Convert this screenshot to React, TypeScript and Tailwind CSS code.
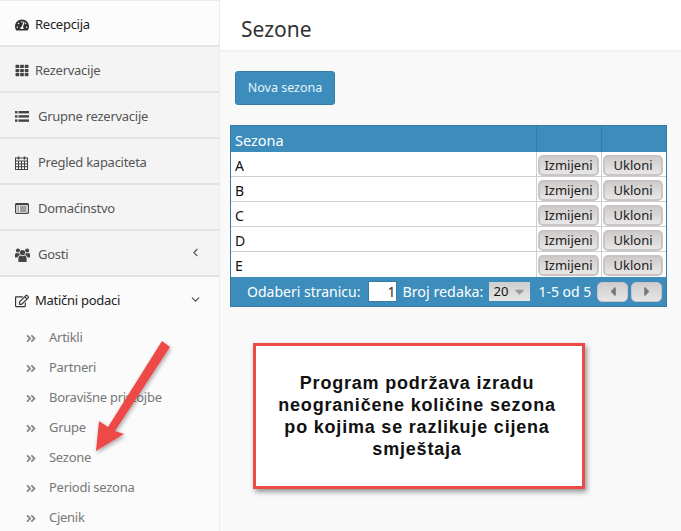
import { FaTachometerAlt, FaTh, FaRegEdit, FaAngleDoubleRight, FaCaretLeft, FaCaretRight, FaCaretDown } from 'react-icons/fa';
import { ChevronLeft, ChevronDown } from 'lucide-react';

function ListIcon() {
  return (
    <svg viewBox="0 0 14 11" className="h-[11px] w-[14px]" fill="currentColor">
      <rect x="0" y="0" width="2.5" height="2.4" />
      <rect x="3.5" y="0" width="10.5" height="2.4" />
      <rect x="0" y="4.2" width="2.5" height="2.4" />
      <rect x="3.5" y="4.2" width="10.5" height="2.4" />
      <rect x="0" y="8.4" width="2.5" height="2.4" />
      <rect x="3.5" y="8.4" width="10.5" height="2.4" />
    </svg>
  );
}

function CalendarIcon() {
  return (
    <svg viewBox="0 0 13 14" className="h-[14px] w-[13px]" fill="none" stroke="currentColor" strokeWidth="1">
      <rect x="0.5" y="2" width="12" height="11.5" />
      <path d="M0.5 5h12M0.5 7.9h12M0.5 10.7h12M3.5 5v8.5M6.5 5v8.5M9.5 5v8.5" />
      <path d="M3.5 0.5v3M9.5 0.5v3" strokeWidth="1.6" />
    </svg>
  );
}

function ListAltIcon() {
  return (
    <svg viewBox="0 0 14 11" className="h-[11px] w-[14px]">
      <rect x="0.6" y="0.6" width="12.8" height="9.8" rx="1" fill="#f4f4f4" stroke="currentColor" strokeWidth="1.2" />
      <rect x="0.6" y="0.6" width="12.8" height="1.6" fill="currentColor" />
      <path d="M2.5 4h1.5M2.5 6h1.5M2.5 8h1.5M5 4h6.5M5 6h6.5M5 8h6.5" stroke="currentColor" strokeWidth="1" />
    </svg>
  );
}

function UsersIcon() {
  return (
    <svg viewBox="0 0 15 14" className="h-[14px] w-[15px]" fill="currentColor">
      <circle cx="7.5" cy="4.6" r="2.6" />
      <path d="M3.4 14V10.2C3.4 8.4 4.6 7.6 5.8 7.6 6.3 8 6.9 8.2 7.5 8.2 8.1 8.2 8.7 8 9.2 7.6 10.4 7.6 11.6 8.4 11.6 10.2V14Z" />
      <circle cx="2.9" cy="2.6" r="2" />
      <circle cx="12.1" cy="2.6" r="2" />
      <path d="M0 9.4V6.8C0 5.6.8 5 1.7 5 2.1 5.3 2.5 5.4 2.9 5.4 3.4 5.4 3.8 5.3 4.1 5.1 4.2 5.8 4.6 6.5 5.1 6.9 3.7 7.2 2.7 8.1 2.5 9.4Z" />
      <path d="M15 9.4V6.8C15 5.6 14.2 5 13.3 5 12.9 5.3 12.5 5.4 12.1 5.4 11.6 5.4 11.2 5.3 10.9 5.1 10.8 5.8 10.4 6.5 9.9 6.9 11.3 7.2 12.3 8.1 12.5 9.4Z" />
    </svg>
  );
}

const MENU = [
  { label: 'Recepcija', icon: <FaTachometerAlt className="h-[14px] w-[14px]" />, active: true, gap: 'w-[20px]' },
  { label: 'Rezervacije', icon: <FaTh className="h-[13px] w-[14px]" />, gap: 'w-[20px]' },
  { label: 'Grupne rezervacije', icon: <ListIcon />, gap: 'w-[23px]' },
  { label: 'Pregled kapaciteta', icon: <CalendarIcon />, gap: 'w-[23px]' },
  { label: 'Domaćinstvo', icon: <ListAltIcon />, gap: 'w-[23px]' },
  { label: 'Gosti', icon: <UsersIcon />, gap: 'w-[23px]', caret: true },
];

const SUBMENU = ['Artikli', 'Partneri', 'Boravišne pristojbe', 'Grupe', 'Sezone', 'Periodi sezona', 'Cjenik'];
const SEASONS = ['A', 'B', 'C', 'D', 'E'];

function GreyButton({ label }: { label: string }) {
  return (
    <button className="h-[21px] w-full rounded-[5px] border-2 border-[#c9c5c5] bg-gradient-to-b from-[#cfcbcb] to-[#e8e6e6] text-[13px] leading-none text-[#1a1a1a]">
      {label}
    </button>
  );
}

function Sidebar() {
  return (
    <aside className="w-[220px] shrink-0 h-[531px] overflow-hidden bg-[#fbfbfb] border-r border-t border-[#ececec] tracking-[-0.27px]">
      {MENU.map(item => (
        <div
          key={item.label}
          className={`h-[46px] flex items-center pt-[3px] pl-[15px] pr-[19px] border-b-2 border-[#e3e3e3] text-[13px] ${
            item.active ? 'bg-[#fcfcfc] text-[#222]' : 'bg-[#f4f4f4] text-[#555]'
          }`}
        >
          <span className={`${item.gap} shrink-0 flex items-center ${item.active ? 'text-[#333]' : 'text-[#444]'}`}>
            {item.icon}
          </span>
          <span className="flex-1">{item.label}</span>
          {item.caret && <ChevronLeft strokeWidth={2} className="h-[13px] w-[13px] -mt-[4px] -mr-[2px] text-[#555]" />}
        </div>
      ))}
      <div className="h-[48px] flex items-center pl-[15px] pr-[19px] text-[13px] text-[#222]">
        <FaRegEdit className="h-[14px] w-[14px] mr-[6px] text-[#333]" />
        <span className="flex-1">Matični podaci</span>
        <ChevronDown strokeWidth={2} className="h-[13px] w-[13px] -mt-[4px] -mr-[2px] text-[#444]" />
      </div>
      <div className="-mt-[2px]">
        {SUBMENU.map(label => (
          <div key={label} className="h-[30px] flex items-center pl-[26px] text-[13px] text-[#777]">
            <FaAngleDoubleRight className="h-[13px] w-[10px] mr-[13px] text-[#888]" />
            {label}
          </div>
        ))}
      </div>
    </aside>
  );
}

function SeasonTable() {
  return (
    <div className="w-[437px] ml-[-5px] mt-[20px] border border-[#357ca5]">
      <div className="h-[26px] flex bg-[#3c8dbc] text-white text-[14.5px] leading-[29px]">
        <div className="w-[305px] pl-[4px]">Sezona</div>
        <div className="w-[65px] border-l border-[#357ca5]" />
        <div className="flex-1 border-l border-[#357ca5]" />
      </div>
      {SEASONS.map((season, i) => (
        <div key={season} className={`h-[25px] flex bg-white text-[14px] text-[#111] ${i < 4 ? 'border-b border-[#cfcfcf]' : ''}`}>
          <div className="w-[305px] pl-[4px] leading-[28px]">{season}</div>
          <div className="w-[65px] border-l border-[#cfcfcf] pl-[1px] pr-[2px] pt-[2px]">
            <GreyButton label="Izmijeni" />
          </div>
          <div className="flex-1 border-l border-[#cfcfcf] pl-[1px] pr-[3px] pt-[2px]">
            <GreyButton label="Ukloni" />
          </div>
        </div>
      ))}
      <div className="h-[29px] flex items-center bg-[#3c8dbc] pl-[16px] text-[14px] text-white">
        <span>Odaberi stranicu:</span>
        <span className="ml-[8px] w-[29px] h-[21px] bg-white border border-[#357ca5] text-right pr-[1px] text-[#333] leading-[20px]">1</span>
        <span className="ml-[5px] w-[81px] text-[14.3px] whitespace-nowrap">Broj redaka:</span>
        <span className="ml-[6px] w-[41px] h-[19px] bg-gradient-to-b from-[#cfcdcd] to-[#e6e6e6] flex items-center justify-between pl-[4px] pr-[3px] text-[13px] text-[#111]">
          20
          <FaCaretDown className="h-[15px] w-[15px] text-[#999]" />
        </span>
        <span className="ml-[8px] w-[52px] whitespace-nowrap text-[14px]">1-5 od 5</span>
        <span className="ml-[7px] w-[31px] h-[20px] rounded-[5px] bg-gradient-to-b from-[#cfcdcd] to-[#e6e6e6] border border-[#c9c5c5] flex items-center justify-center">
          <FaCaretLeft className="h-[15px] w-[10px] text-[#777]" />
        </span>
        <span className="ml-[3px] w-[31px] h-[20px] rounded-[5px] bg-gradient-to-b from-[#cfcdcd] to-[#e6e6e6] border border-[#c9c5c5] flex items-center justify-center">
          <FaCaretRight className="h-[15px] w-[10px] text-[#777]" />
        </span>
      </div>
    </div>
  );
}

export default function App() {
  return (
    <div className="relative flex w-[681px] h-[531px] overflow-hidden bg-[#f9f9f9] font-['Noto_Sans','Open_Sans',sans-serif]">
      <Sidebar />
      <main className="flex-1 min-w-0">
        <div className="h-[51px] bg-white border-b border-[#f0f0f0] shadow-[0_1px_2px_rgba(0,0,0,0.03)] pl-[21px] text-[21px] leading-[58px] text-[#333]">
          Sezone
        </div>
        <div className="pl-[15px] pt-[20px]">
          <button className="w-[100px] h-[34px] rounded-[3px] bg-[#3c8dbc] border border-[#367fa9] text-[12.5px] text-[#e6f3fa]">
            Nova sezona
          </button>
          <SeasonTable />
          <div className="mt-[36px] ml-[18px] w-[332px] h-[146px] pr-[4px] bg-white border-[3px] border-[#ec4a47] shadow-[2px_3px_5px_rgba(0,0,0,0.4)] flex items-center justify-center text-center font-['Liberation_Sans',sans-serif] font-bold text-[18px] tracking-[0.8px] leading-[22px] text-[#111]">
            <p>
              Program podržava izradu
              <br />
              neograničene količine sezona
              <br />
              po kojima se razlikuje cijena
              <br />
              smještaja
            </p>
          </div>
        </div>
      </main>
      <svg className="absolute left-0 top-0 pointer-events-none" width="220" height="531" viewBox="0 0 220 531">
        <defs>
          <filter id="arrowShadow" x="-30%" y="-30%" width="160%" height="160%">
            <feDropShadow dx="1" dy="2" stdDeviation="2" floodColor="#000" floodOpacity="0.35" />
          </filter>
        </defs>
        <polygon points="162,341 170,347 115,431 124,434 96,451 99,421 108,427" fill="#ec4a47" filter="url(#arrowShadow)" />
      </svg>
    </div>
  );
}
